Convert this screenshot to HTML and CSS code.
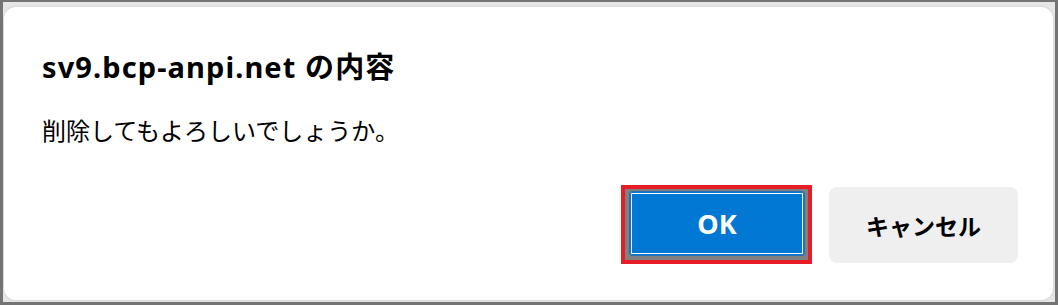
FILE: index.html
```html
<!DOCTYPE html>
<html lang="ja">
<head>
<meta charset="utf-8">
<link rel="stylesheet" href="styles.css">
</head>
<body>
<div class="frame">
  <div class="dialog">
    <div class="title">sv9.bcp-anpi.net の内容</div>
    <div class="message">削除してもよろしいでしょうか。</div>
    <div class="actions">
      <div class="highlight">
        <div class="focus">
          <button class="btn btn-ok">OK</button>
        </div>
      </div>
      <button class="btn btn-cancel">キャンセル</button>
    </div>
  </div>
</div>
</body>
</html>
```

FILE: styles.css
```css
html, body {
  margin: 0;
  padding: 0;
  background: #767676;
}
body {
  width: 1058px;
  height: 305px;
  overflow: hidden;
  font-family: "Noto Sans", "Noto Sans CJK JP", sans-serif;
  color: #000;
}
.frame {
  box-sizing: border-box;
  width: 1058px;
  height: 305px;
  border-style: solid;
  border-color: #747474;
  border-width: 2px 3px 3px 3px;
  background: #e6e6e6;
  padding: 5px 2px 2px 1px;
}
.dialog {
  box-sizing: border-box;
  height: 100%;
  background: #fff;
  border-radius: 12px;
  box-shadow: 0 0 3px rgba(0,0,0,0.12);
  padding: 42px 35px 0 38px;
  display: flex;
  flex-direction: column;
}
.title {
  font-size: 29px;
  font-weight: 700;
  letter-spacing: 1.1px;
  line-height: 36px;
}
.message {
  margin-top: 28px;
  font-family: "Noto Sans CJK JP", sans-serif;
  font-size: 24px;
  line-height: 34px;
}
.actions {
  margin-top: 38px;
  display: flex;
  justify-content: flex-end;
  align-items: center;
  gap: 17px;
}
.highlight {
  border: 4px solid #e81c24;
}
.focus {
  background: #808080;
  padding: 2px 3px 4px 4px;
  display: flex;
}
.btn {
  font-family: "Noto Sans", "Noto Sans CJK JP", sans-serif;
  font-weight: 700;
  margin: 0;
  box-sizing: border-box;
  cursor: pointer;
}
.btn-ok {
  width: 176px;
  height: 65px;
  font-size: 27px;
  background: #0078d4;
  color: #fff;
  border: 1px solid #2a6fb8;
  border-radius: 3px;
  box-shadow: inset 0 0 0 1px #0078d4, inset 0 0 0 2px #ffffff;
}
.btn-cancel {
  width: 189px;
  height: 76px;
  font-size: 23px;
  background: #efefef;
  color: #000;
  border: none;
  border-radius: 8px;
}
```
